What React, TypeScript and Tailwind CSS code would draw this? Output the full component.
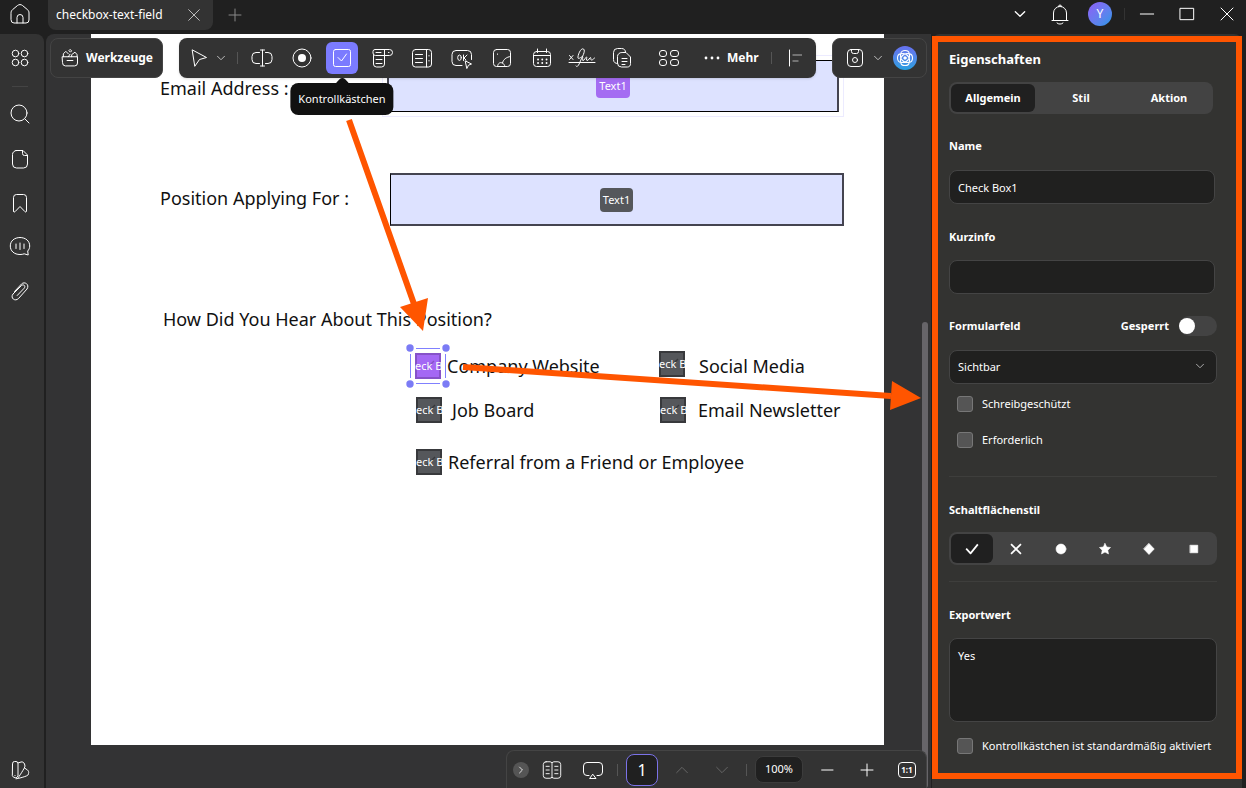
import React, { useState } from 'react';

interface IconProps {
  children: React.ReactNode;
  className?: string;
}

const Icon: React.FC<IconProps> = ({ children, className = 'size-6' }) => (
  <svg className={`shrink-0 ${className}`} viewBox="0 0 24 24" fill="none" stroke="currentColor" strokeWidth="1" strokeLinecap="round" strokeLinejoin="round" aria-hidden="true">
    {children}
  </svg>
);

const ChevronIcon = ({ className = 'size-3' }: { className?: string }) => (
  <Icon className={className}><path strokeWidth="2" d="M5 8.500l7 7 7-7" /></Icon>
);

const GridIcon = () => (
  <Icon>
    <circle cx="7.500" cy="7.500" r="3.300" /><circle cx="16.500" cy="7.500" r="3.300" />
    <circle cx="7.500" cy="16.500" r="3.300" /><circle cx="16.500" cy="16.500" r="3.300" />
  </Icon>
);

const sideTools = [
  { label: 'Suchen', icon: <Icon><circle cx="11" cy="10" r="8" /><path d="M17 16l4 4" /></Icon> },
  { label: 'Seiten', icon: <Icon><path d="M8 3.500h7l4.500 4.500v9a4 4 0 0 1-4 4H8.500a4 4 0 0 1-4-4V7.500a4 4 0 0 1 4-4zM14.500 3.500v3a2 2 0 0 0 2 2h3" /></Icon> },
  { label: 'Lesezeichen', icon: <Icon><path d="M5.500 20V6.500a3 3 0 0 1 3-3h7a3 3 0 0 1 3 3V20c0 1-.8 1.300-1.500.7L12 15.500l-5 5.200c-.7.600-1.500.3-1.500-.7z" /></Icon> },
  { label: 'Kommentare', icon: <Icon><path d="M12 2.500c-5.800 0-9.700 3.500-9.700 8.500s3.900 8.500 9.700 8.500c1.600 0 3-.2 4.200-.7l4 1.200-.5-4c1.300-1.400 2-3 2-5 0-5-3.900-8.500-9.700-8.500zM8 9v4.500M12 8v6.500M16 9v4.500" /></Icon> },
  { label: 'Anhänge', icon: <Icon><path d="M6.500 12.500l7-7.500c3-3 8.500.5 5.500 5L10.500 19.500c-3.500 3.500-8.500-.5-5.500-4.500l8.500-8.500c2-1.700 4.500.5 2.700 2.700l-7 7.300" /></Icon> },
];

const formTools = [
  { id: 'text', label: 'Textfeld', icon: <Icon><path d="M9.500 6.500H6a4 4 0 0 0-4 4v3a4 4 0 0 0 4 4h3.500M15.500 6.500h2.500a4 4 0 0 1 4 4v3a4 4 0 0 1-4 4h-2.500M12.500 4v16M10.500 4h4M10.500 20h4" /></Icon> },
  { id: 'radio', label: 'Optionsfeld', icon: <Icon><circle cx="12" cy="12" r="9" /><circle cx="12" cy="12" r="4" fill="currentColor" stroke="none" /></Icon> },
  { id: 'check', label: 'Kontrollkästchen', icon: <Icon><rect x="3.500" y="3.500" width="17" height="17" rx="2" /><path d="M8 11.500l3.500 3.500 5-7" /></Icon> },
  { id: 'combo', label: 'Dropdown', icon: <Icon><path d="M14.500 9.500H5.500a2.500 2.500 0 0 1-2.500-2.500V5.500a2 2 0 0 1 2-2h14.500a3 3 0 0 1 0 6h-5V3.500M3.500 9.500V18a3 3 0 0 0 3 3h5a3 3 0 0 0 3-3V9.500M6 6.500h5M6 13.500h6M6 17.500h6M18.500 6.500h.500" /></Icon> },
  { id: 'list', label: 'Listenfeld', icon: <Icon><rect x="2.500" y="3.500" width="19" height="17.500" rx="3" /><path d="M16.500 3.500V21M5.500 8.500h7M5.500 12.500h7M5.500 16.500h7M19 9.500v.5M19 14.500v.5" /></Icon> },
  {
    id: 'button', label: 'Schaltfläche', icon: (
      <Icon>
        <path d="M12 19.500H6a4 4 0 0 1-4-4V8.500a4 4 0 0 1 4-4h11.500a4 4 0 0 1 4 4v5" />
        <ellipse cx="9.500" cy="11.700" rx="1.800" ry="2.700" /><path d="M13.500 9v5.500M17 9l-3 3 2 2M15.500 15l6 3-3 1.200-1.500 3z" />
      </Icon>
    ),
  },
  { id: 'image', label: 'Bildfeld', icon: <Icon><rect x="3.500" y="3.500" width="17" height="17" rx="3" /><path d="M7.500 20.500c.5-3.500 2.500-4.500 5-3.500 1 .5 2 1.800 2.500 3.500M12.500 17c.5-3.500 4-6 8-6.500M7.500 8v.3" /></Icon> },
  { id: 'date', label: 'Datum', icon: <Icon><rect x="3.500" y="5.500" width="17" height="15" rx="3" /><path d="M3.500 9.500h17M7.500 3v3.500M16.500 3v3.500" /><path strokeWidth="1.800" d="M8 13.500h.1M12.200 13.500h.1M16.500 13.500h.1M8 17h.1M12.200 17h.1M16.500 17h.1" /></Icon> },
  {
    id: 'sign', label: 'Signatur', icon: (
      <Icon className="h-6 w-7">
        <path d="M-1 16.500h26M-.5 9.500l3.500 4M3 9.500l-3.500 4M6 20c1 1.500 2.500 0 4-4 2-5 6-11 3.500-13-3-1.500-6 7-5.500 9 .5 1.500 3-1 4.500-1.500 1-.2-1 4 .5 4s2.500-3.500 3.500-3.500-1 3.500.5 3.500c2 0 2.500-3 3.500-3s-.5 2.500 1 2.500 2-1.500 3-2" />
      </Icon>
    ),
  },
  { id: 'copy', label: 'Duplizieren', icon: <Icon><path d="M7.500 17.500c-2 0-4-1-4-4V6.500a4 4 0 0 1 4-4h4c2.500 0 4 1.500 4 3.500M12.500 6.500h3.500l4.500 4.500v6.500a3 3 0 0 1-3 3.500H11.500a4 4 0 0 1-4-4V10.500a4 4 0 0 1 4-4zM12 12.500h5M12 15.500h5M12 18.500h3" /></Icon> },
];

const buttonStyles = [
  { id: 'check', label: 'Häkchen', icon: <path strokeWidth="3" strokeLinecap="butt" d="M2 11.500l7.500 8L22 4" /> },
  { id: 'cross', label: 'Kreuz', icon: <path strokeWidth="3" strokeLinecap="butt" d="M3.500 3.500l17 17M20.500 3.500l-17 17" /> },
  { id: 'circle', label: 'Kreis', icon: <circle cx="12" cy="12" r="8.500" fill="currentColor" /> },
  { id: 'star', label: 'Stern', icon: <path fill="currentColor" d="M12 2.500l3 6 6.500 1-4.700 4.500 1.200 6.500-6-3.200-6 3.200 1.200-6.500L2.500 9.500l6.500-1z" /> },
  { id: 'diamond', label: 'Raute', icon: <path fill="currentColor" d="M12 2.500l9 9.500-9 9.500L3 12z" /> },
  { id: 'square', label: 'Quadrat', icon: <rect x="5.500" y="5.500" width="13" height="13" fill="currentColor" /> },
];

const TitleBar = () => (
  <header className="flex h-[34px] shrink-0 items-start">
    <button aria-label="Start" className="flex h-7 w-10 items-center justify-center">
      <Icon><path d="M3 11c0-1.500.5-2.500 1.500-3.300l5-4.200c1.500-1.200 3.500-1.200 5 0l5 4.200c1 .8 1.500 1.800 1.500 3.300v7a3 3 0 0 1-3 3H6a3 3 0 0 1-3-3zM9 21v-5.500a3 3 0 0 1 6 0V21" /></Icon>
    </button>
    <div className="ml-2 flex h-[30px] w-[165px] items-center justify-between rounded-b-lg bg-[#333333] pr-[11px] pl-2">
      <span className="text-xs">checkbox-text-field</span>
      <button aria-label="Tab schließen" className="text-[#bbbbbb]"><Icon className="size-4"><path strokeWidth="1.500" d="M4 4l16 16M20 4L4 20" /></Icon></button>
    </div>
    <button aria-label="Neuer Tab" className="ml-3 flex h-[30px] w-5 items-center justify-center text-[#888888]"><Icon className="size-4"><path strokeWidth="1.500" d="M12 3v18M3 12h18" /></Icon></button>
    <div className="ml-auto flex h-7 items-center">
      <button aria-label="Tabs anzeigen" className="flex w-8 justify-center"><ChevronIcon className="size-4" /></button>
      <button aria-label="Benachrichtigungen" className="ml-2 flex w-8 justify-center">
        <Icon><path d="M5.500 18V11a6.500 6.500 0 0 1 13 0v7M4 18.500h16M10.500 4.500a1.500 1.500 0 0 1 3 0M9 21c1.500 1.500 4.500 1.500 6 0" /></Icon>
      </button>
      <button className="ml-3 flex size-6 items-center justify-center rounded-full bg-gradient-to-br from-[#8b5cf6] to-[#1296e8] text-xs">Y</button>
      <span className="mx-3 h-3 w-px bg-[#333333]" />
      <button aria-label="Minimieren" className="flex w-5 justify-center"><Icon className="size-4"><path strokeWidth="1.500" d="M2 12h20" /></Icon></button>
      <button aria-label="Maximieren" className="ml-5 flex w-5 justify-center"><Icon className="size-4"><path strokeWidth="1.500" strokeLinejoin="miter" d="M2 3.500h20v17H2z" /></Icon></button>
      <button aria-label="Schließen" className="mr-[9px] ml-5 flex w-5 justify-center"><Icon className="size-4"><path strokeWidth="1.500" d="M3 3l18 18M21 3L3 21" /></Icon></button>
    </div>
  </header>
);

const SideRail = () => (
  <nav className="mr-0.5 flex w-11 shrink-0 flex-col items-center rounded-tr-lg bg-[#333333] pt-3 pr-1 pb-1.5">
    <button aria-label="Übersicht"><GridIcon /></button>
    <span className="mt-4 mb-4 h-px w-4 bg-[#444444]" />
    <div className="flex flex-col gap-5">
      {sideTools.map(tool => (
        <button key={tool.label} aria-label={tool.label}>{tool.icon}</button>
      ))}
    </div>
    <button aria-label="Farbschema" className="mt-auto">
      <Icon><path d="M4.500 5.500a2 2 0 0 1 2-2h1.500a2 2 0 0 1 2 2V18a3 3 0 0 1-5.500 0zM10 5l3-1c1.500-.5 3 .5 3.500 2l.5 2c.3 1.500-7 12-7 12M16.500 10l3 2c1 1 1.500 2 1 3.500l-.5 1.500c-.5 1-9 3.500-12 3.800M7 17.500v.2" /></Icon>
    </button>
  </nav>
);

const EditorToolbar = () => {
  const [active, setActive] = useState('check');

  return (
    <div className="absolute inset-x-1 top-1 z-10 flex">
      <button className="mr-4 flex h-10 w-[113px] shrink-0 items-center justify-center gap-1.5 rounded-lg border border-[#444444] bg-[#333333] text-xs font-bold">
        <Icon className="size-5"><path d="M3 10.500h18V18a3.500 3.500 0 0 1-3.500 3.500h-11A3.500 3.500 0 0 1 3 18zM8.500 15h7M4 10.500V7l3-3 3 3M10 10.500l2-3M14 10.500V8l4-3 2.500 3v2.500M12.500 2l1.500 1.500-1.500 1.500L11 3.500z" strokeWidth="1.200" /></Icon>
        Werkzeuge
      </button>

      <div className="flex h-10 shrink-0 items-center rounded-lg bg-[#333333] px-1 shadow-sm">
        <button aria-label="Auswählen" className="flex size-8 items-center justify-center"><Icon><path d="M5.500 4l14 7.500-7 2-4.500 6.500z" /></Icon></button>
        <button aria-label="Auswahloptionen" className="text-[#bbbbbb]"><ChevronIcon /></button>
        <span className="mr-2 ml-2.5 h-3 w-px bg-[#555555]" />
        <div className="flex gap-2">
          {formTools.map(tool => (
            <button
              key={tool.id}
              aria-label={tool.label}
              onClick={() => setActive(tool.id)}
              className={`relative flex size-8 items-center justify-center rounded-md ${active === tool.id ? 'bg-[#7b7bff]' : ''}`}
            >
              {tool.icon}
              {active === tool.id && (
                <span className="absolute top-[41px] left-1/2 flex h-8 -translate-x-1/2 items-center rounded-lg bg-[#111111] px-2 text-[11px] whitespace-nowrap">
                  <span className="absolute -top-1 left-1/2 size-3 -translate-x-1/2 rotate-45 rounded-sm bg-[#111111]" />
                  <span className="relative">{tool.label}</span>
                </span>
              )}
            </button>
          ))}
        </div>
        <button aria-label="Raster" className="ml-[15px] flex size-8 items-center justify-center">
          <Icon><rect x="2.500" y="4.500" width="7" height="6" rx="2.500" /><rect x="13.500" y="4.500" width="8" height="6" rx="2.500" /><rect x="2.500" y="13.500" width="7" height="6" rx="2.500" /><rect x="13.500" y="13.500" width="8" height="6" rx="2.500" /></Icon>
        </button>
        <button className="ml-[18px] flex items-center gap-1.5 text-xs font-bold">
          <svg className="h-1 w-[18px]" viewBox="0 0 18 4" fill="currentColor" aria-hidden="true"><circle cx="3" cy="2" r="1.400" /><circle cx="9" cy="2" r="1.400" /><circle cx="15" cy="2" r="1.400" /></svg>
          Mehr
        </button>
        <span className="mr-2 ml-3 h-3 w-px bg-[#555555]" />
        <button aria-label="Ausrichten" className="flex size-8 items-center justify-center"><Icon><path d="M5.500 4v16" /><path stroke="#888888" strokeWidth="1.500" strokeLinecap="butt" d="M8.500 9H18M8.500 15h6" /></Icon></button>
      </div>

      <div className="ml-auto flex h-10 w-[95px] shrink-0 items-center rounded-lg border border-[#444444] bg-[#333333] pl-2.5">
        <button aria-label="Speichern"><Icon><rect x="4.500" y="3.500" width="15" height="17" rx="3.500" /><path d="M8.500 3.500v2a2 2 0 0 0 2 2h3a2 2 0 0 0 2-2v-2" /><circle cx="12" cy="14" r="2.500" /></Icon></button>
        <button aria-label="Speicheroptionen" className="ml-[5px] text-[#bbbbbb]"><ChevronIcon /></button>
        <button aria-label="KI-Assistent" className="ml-[9px] flex size-6 items-center justify-center rounded-full bg-gradient-to-b from-[#6670f0] to-[#239fe0]">
          <Icon className="size-5"><path strokeWidth="1.300" d="M7 7c0-2.500 2.500-4 5-4s5 1.500 5 4c2.500 0 4 2.500 4 5s-1.500 5-4 5c0 2.500-2.500 4-5 4s-5-1.500-5-4c-2.500 0-4-2.500-4-5s1.500-5 4-5zM7 7c3-1 6 0 8 2s3 5 2 8M17 7c1 3 0 6-2 8s-5 3-8 2M7 7c-1 3 0 6 2 8M17 17c-3 1-6 0-8-2M17 7c-3-1-6 0-8 2s-3 5-2 8" /><circle cx="12" cy="12" r="1.500" fill="currentColor" /></Icon>
        </button>
      </div>
    </div>
  );
};

interface CheckFieldProps {
  label: string;
  gap: string;
  className?: string;
  selected?: boolean;
}

const CheckField: React.FC<CheckFieldProps> = ({ label, gap, className = 'items-center', selected }) => (
  <div className={`flex h-[30px] ${gap} ${className}`}>
    <div className="relative">
      <button className={`relative flex size-[26px] items-center justify-center overflow-hidden text-[11px] whitespace-nowrap text-white inset-ring-2 ${selected ? 'bg-[#a468f4] inset-ring-[#8652c8]' : 'bg-[#55575b] inset-ring-[#38393c]'}`}>
        <svg className="absolute inset-0 size-full" viewBox="0 0 26 26" fill="none" stroke={selected ? '#8652c8' : '#38393c'} strokeWidth="1.500" aria-hidden="true"><path d="M11 16l8-8" /></svg>
        <span className="relative">Check Box</span>
      </button>
      {selected && (
        <svg className="pointer-events-none absolute -inset-2.5 size-[46px]" viewBox="0 0 46 46" aria-hidden="true">
          <path stroke="#8080ff" d="M11 5.500h24M11 40.500h24M5.500 11v24M40.500 11v24" />
          <g fill="#7b7bf5"><circle cx="5" cy="5" r="3.700" /><circle cx="41" cy="5" r="3.700" /><circle cx="5" cy="41" r="3.700" /><circle cx="41" cy="41" r="3.700" /></g>
        </svg>
      )}
    </div>
    <span className="self-center whitespace-nowrap">{label}</span>
  </div>
);

const DocumentPage = () => (
  <main className="mr-[47px] mb-[43px] ml-[45px] flex-1 overflow-hidden bg-white pt-[26px] text-lg text-[#111111]">
    <div className="flex h-[52px] items-center pr-[45px] pl-[69px]">
      <span className="w-[227px] shrink-0 pt-1">Email Address :</span>
      <div className="flex h-full flex-1 items-center justify-center border border-x-2 border-black border-x-[#444450] bg-[#dde2ff] outline-1 outline-offset-4 outline-[#ecebff]">
        <span className="rounded-sm bg-[#a46cf2] px-[3px] py-0.5 text-[11px] leading-5 text-white">Text1</span>
      </div>
    </div>
    <div className="mt-[61px] flex h-[53px] items-center pr-[40px] pl-[69px]">
      <span className="w-[230px] shrink-0 pb-1">Position Applying For :</span>
      <div className="flex h-full flex-1 items-center justify-center border-2 border-l border-[#444450] border-l-black bg-[#dde2ff]">
        <span className="rounded-sm bg-[#55575b] px-[3px] py-0.5 text-[11px] leading-5 text-white">Text1</span>
      </div>
    </div>
    <p className="mt-[79px] pl-[72px]">How Did You Hear About This Position?</p>
    <div className="mt-[18px] grid grid-cols-[244px_1fr] pl-[324px]">
      <CheckField label="Company Website" gap="gap-1.5" selected />
      <CheckField label="Social Media" gap="gap-3.5" className="items-start" />
    </div>
    <div className="mt-3.5 grid grid-cols-[244px_1fr] pl-[325px]">
      <CheckField label="Job Board" gap="gap-2.5" />
      <CheckField label="Email Newsletter" gap="gap-3" />
    </div>
    <div className="mt-[22px] pl-[325px]">
      <CheckField label="Referral from a Friend or Employee" gap="gap-1.5" />
    </div>
  </main>
);

const ViewBar = () => (
  <footer className="absolute right-1 bottom-0 z-10 flex h-[38px] w-[421px] items-center rounded-t-lg border border-b-0 border-[#444444] bg-[#333333] pl-1.5">
    <button aria-label="Ausklappen" className="flex size-4 items-center justify-center rounded-full bg-[#555555]"><ChevronIcon className="size-2.5 -rotate-90" /></button>
    <button aria-label="Leseansicht" className="ml-3"><Icon className="size-[22px]"><path d="M12 4v16.500M5.500 3h4.500L12 4l2-1h4.500a3 3 0 0 1 3 3v12a3 3 0 0 1-3 3H14l-2-1-2 1H5.500a3 3 0 0 1-3-3V6a3 3 0 0 1 3-3zM5.500 8H9M5.500 12H9M5.500 16H9M15 8h3.500M15 12h3.500M15 16h3.500" /></Icon></button>
    <button aria-label="Präsentation" className="ml-[18px]"><Icon className="size-6"><path d="M8 17.500H6a3.500 3.500 0 0 1-3.500-3.500V8A3.500 3.500 0 0 1 6 4.500h12A3.500 3.500 0 0 1 21.500 8v6a3.500 3.500 0 0 1-3.500 3.500h-2M12 16.500l3 4H9z" /></Icon></button>
    <span className="mr-2 ml-3 h-3 w-px bg-[#555555]" />
    <input aria-label="Seite" defaultValue="1" className="size-8 rounded-lg border border-[#7b72e8] bg-[#202020] text-center text-base" />
    <button aria-label="Vorherige Seite" className="ml-4 text-[#666666]"><Icon className="size-4"><path strokeWidth="1.500" d="M4 16l8-8 8 8" /></Icon></button>
    <button aria-label="Nächste Seite" className="ml-6 text-[#666666]"><Icon className="size-4"><path strokeWidth="1.500" d="M4 8l8 8 8-8" /></Icon></button>
    <span className="mr-2 ml-4 h-3 w-px bg-[#555555]" />
    <button className="h-[27px] w-12 rounded-lg border border-[#3c3c3c] bg-[#202020] text-[11px]">100%</button>
    <button aria-label="Verkleinern" className="ml-4"><Icon className="size-4"><path strokeWidth="1.500" d="M4 12h17" /></Icon></button>
    <button aria-label="Vergrößern" className="ml-6"><Icon className="size-4"><path strokeWidth="1.500" d="M3 12h18M12 3v18" /></Icon></button>
    <button className="ml-[23px] flex h-4 w-[18px] items-center justify-center rounded-sm border border-white text-[8px] leading-none font-bold">1:1</button>
  </footer>
);

const checkboxClass = 'size-4 shrink-0 appearance-none rounded-[3px] border border-[#777777] bg-[#555555] checked:bg-[#7b7bff]';

const PropertiesPanel = () => {
  const [tab, setTab] = useState('Allgemein');
  const [style, setStyle] = useState('check');

  return (
    <aside className="mr-1 ml-px flex w-[310px] shrink-0 flex-col rounded-t-lg bg-[#333331] pt-0.5 pb-[9px]">
      <div className="flex flex-1 flex-col overflow-hidden border-[6px] border-[#ff5500] pt-[7px] pr-[19px] pl-[11px] text-[11px]">
        <h2 className="text-[13px] leading-5 font-bold">Eigenschaften</h2>
        <div role="tablist" className="mt-[13px] mr-1 grid h-8 grid-cols-3 gap-1 rounded-lg bg-[#434343] p-0.5">
          {['Allgemein', 'Stil', 'Aktion'].map(name => (
            <button key={name} role="tab" aria-selected={tab === name} onClick={() => setTab(name)} className={`rounded-md font-bold ${tab === name ? 'bg-[#202020]' : ''}`}>{name}</button>
          ))}
        </div>

        <label htmlFor="name" className="mt-[22px] leading-5 font-bold">Name</label>
        <input id="name" type="text" defaultValue="Check Box1" className="mt-3.5 mr-0.5 h-[34px] rounded-lg border border-[#444444] bg-[#20201f] px-2" />

        <label htmlFor="tooltip" className="mt-[23px] leading-5 font-bold">Kurzinfo</label>
        <input id="tooltip" type="text" className="mt-[13px] mr-0.5 h-[34px] rounded-lg border border-[#444444] bg-[#20201f] px-2" />

        <div className="mt-[22px] flex h-5 items-center font-bold">
          <label htmlFor="visibility">Formularfeld</label>
          <label htmlFor="locked" className="mr-2.5 ml-auto">Gesperrt</label>
          <input id="locked" type="checkbox" role="switch" className="h-5 w-[38px] appearance-none rounded-full bg-[#434343] py-0.5 before:block before:size-4 before:rounded-full before:bg-white checked:before:translate-x-[22px]" />
        </div>
        <div className="relative mt-3.5">
          <select id="visibility" className="h-[34px] w-full appearance-none rounded-lg border border-[#444444] bg-[#20201f] px-2">
            <option>Sichtbar</option>
            <option>Versteckt</option>
          </select>
          <ChevronIcon className="pointer-events-none absolute top-2.5 right-[11px] size-3 text-[#aaaaaa]" />
        </div>

        <label className="mt-2.5 flex h-5 items-center gap-[9px] pl-2"><input type="checkbox" className={checkboxClass} />Schreibgeschützt</label>
        <label className="mt-4 flex h-5 items-center gap-[9px] pl-2"><input type="checkbox" className={checkboxClass} />Erforderlich</label>

        <hr className="mt-[26px] border-[#3e3e3c]" />

        <h3 className="mt-[23px] leading-5 font-bold">Schaltflächenstil</h3>
        <div className="mt-3 grid h-[33px] grid-cols-6 gap-0.5 rounded-lg bg-[#434343] p-0.5">
          {buttonStyles.map(s => (
            <button key={s.id} aria-label={s.label} aria-pressed={style === s.id} onClick={() => setStyle(s.id)} className={`flex items-center justify-center rounded-md ${style === s.id ? 'bg-[#202020]' : ''}`}>
              <Icon className="size-3.5">{s.icon}</Icon>
            </button>
          ))}
        </div>

        <hr className="mt-4 border-[#3e3e3c]" />

        <label htmlFor="export" className="mt-[23px] leading-5 font-bold">Exportwert</label>
        <textarea id="export" defaultValue="Yes" className="mt-[13px] h-[84px] resize-none rounded-lg border border-[#444444] bg-[#20201f] px-2 py-[9px]" />
        <label className="mt-3.5 flex h-5 items-center gap-[9px] pl-2 whitespace-nowrap"><input type="checkbox" className={checkboxClass} />Kontrollkästchen ist standardmäßig aktiviert</label>
      </div>
    </aside>
  );
};

const Arrows = () => (
  <svg className="pointer-events-none absolute inset-0 z-20 size-full" fill="#ff5500" stroke="#ff5500" strokeWidth="6" aria-hidden="true">
    <path d="M349 120l65 184M463 367l428 29" />
    <path stroke="none" d="M400 307l28-9-5 33zM892 381l-2 29 31-12z" />
  </svg>
);

const App = () => (
  <div className="relative flex h-screen flex-col overflow-hidden bg-[#202020] font-['Noto_Sans',sans-serif] text-white">
    <TitleBar />
    <div className="flex min-h-0 flex-1">
      <SideRail />
      <section className="relative flex min-w-0 flex-1 rounded-tl-lg bg-[#333334]">
        <EditorToolbar />
        <DocumentPage />
        <span className="absolute right-[3px] bottom-0 h-[466px] w-1.5 rounded-full bg-[#676569]" />
        <ViewBar />
      </section>
      <PropertiesPanel />
    </div>
    <Arrows />
  </div>
);

export default App;
